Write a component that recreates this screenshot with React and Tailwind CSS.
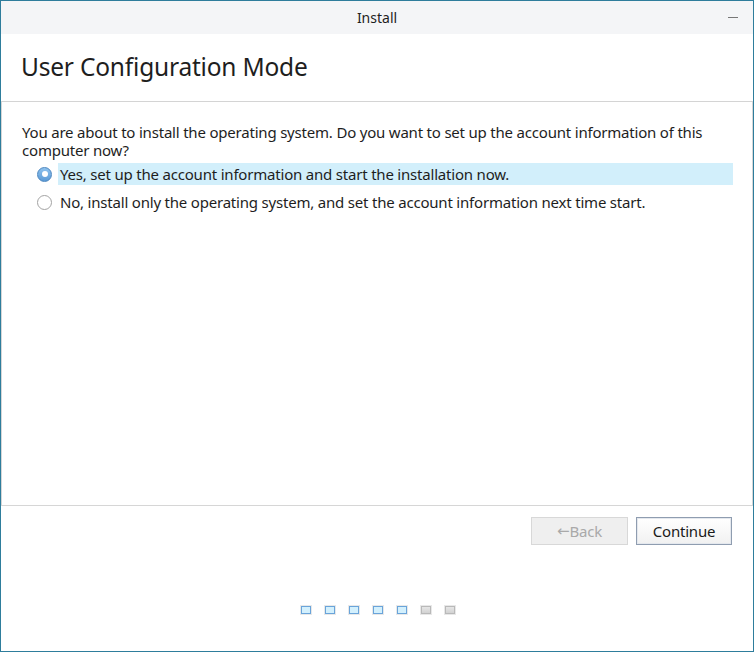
import React from "react";

function Dot({ active }) {
  return (
    <div className="p-px bg-[#e8e8e8]">
      <div
        className={
          active
            ? "w-[10px] h-[8px] border border-[#6aa4da] bg-[#d3f0fd]"
            : "w-[10px] h-[8px] border border-[#b9b9b9] bg-gradient-to-b from-[#e6e6e6] to-[#d2d2d2]"
        }
      />
    </div>
  );
}

export default function App() {
  const font = { fontFamily: '"Noto Sans", "Open Sans", sans-serif' };
  return (
    <div
      className="w-[754px] h-[652px] border border-[#2e7d9c] bg-white flex flex-col text-[#1e1e1e]"
      style={font}
    >
      {/* title bar */}
      <div className="h-[33px] bg-[#f4f5f7] flex items-center justify-center relative shrink-0">
        <span className="text-[14px] leading-none">Install</span>
        <div className="absolute right-[15px] top-[16px] w-[10px] h-px bg-[#777]" />
      </div>
      {/* header */}
      <div className="h-[68px] flex items-center pl-[20px] shrink-0 border-b border-[#d4d4d4]">
        <h1 className="text-[24.5px] leading-none tracking-[-0.2px]">User Configuration Mode</h1>
      </div>
      {/* content panel */}
      <div className="h-[404px] border-x border-b border-[#d6d6d6] pt-[21px] shrink-0">
        <p className="pl-[20px] text-[15px] leading-[18px] tracking-[-0.2px]">
          You are about to install the operating system. Do you want to set up the account information of this
          <br />
          computer now?
        </p>
        <div className="mt-[4px] flex flex-col gap-[6px] pl-[35px] pr-[19px]">
          <div className="flex items-center h-[22px]">
            <div className="w-[15px] h-[15px] rounded-full border border-[#4c86bf] bg-gradient-to-b from-[#8ec2ee] to-[#5b9ad6] flex items-center justify-center shrink-0">
              <div className="w-[6px] h-[6px] rounded-full bg-white" />
            </div>
            <div className="ml-[6px] flex-1 h-[22px] bg-[#d2effb] flex items-center pl-[2px] text-[15px] tracking-[-0.2px]">
              Yes, set up the account information and start the installation now.
            </div>
          </div>
          <div className="flex items-center h-[22px]">
            <div className="w-[15px] h-[15px] rounded-full border border-[#a3a3a3] bg-white shrink-0" />
            <div className="ml-[6px] flex-1 h-[22px] flex items-center pl-[2px] text-[15px] tracking-[-0.2px]">
              No, install only the operating system, and set the account information next time start.
            </div>
          </div>
        </div>
      </div>
      {/* footer */}
      <div className="flex-1 flex flex-col">
        <div className="flex justify-end gap-[8px] pr-[21px] pt-[11px]">
          <button className="w-[97px] h-[28px] border border-[#d8d8d8] bg-[#efefef] text-[#a9a9a9] text-[15px] flex items-center justify-center tracking-[-0.2px]">
            <span className="text-[15px] leading-none" style={{ fontFamily: '"DejaVu Sans", sans-serif' }}>←</span>Back
          </button>
          <button className="w-[96px] h-[28px] border border-[#8f9db0] bg-gradient-to-b from-white to-[#f1f1f1] text-[#1a1a1a] text-[15px] flex items-center justify-center shadow-[inset_0_0_0_1px_#e4e8ee] tracking-[-0.2px]">
            Continue
          </button>
        </div>
        <div className="flex justify-center gap-[12px] mt-[60px] pl-[1px]">
          <Dot active />
          <Dot active />
          <Dot active />
          <Dot active />
          <Dot active />
          <Dot />
          <Dot />
        </div>
      </div>
    </div>
  );
}
